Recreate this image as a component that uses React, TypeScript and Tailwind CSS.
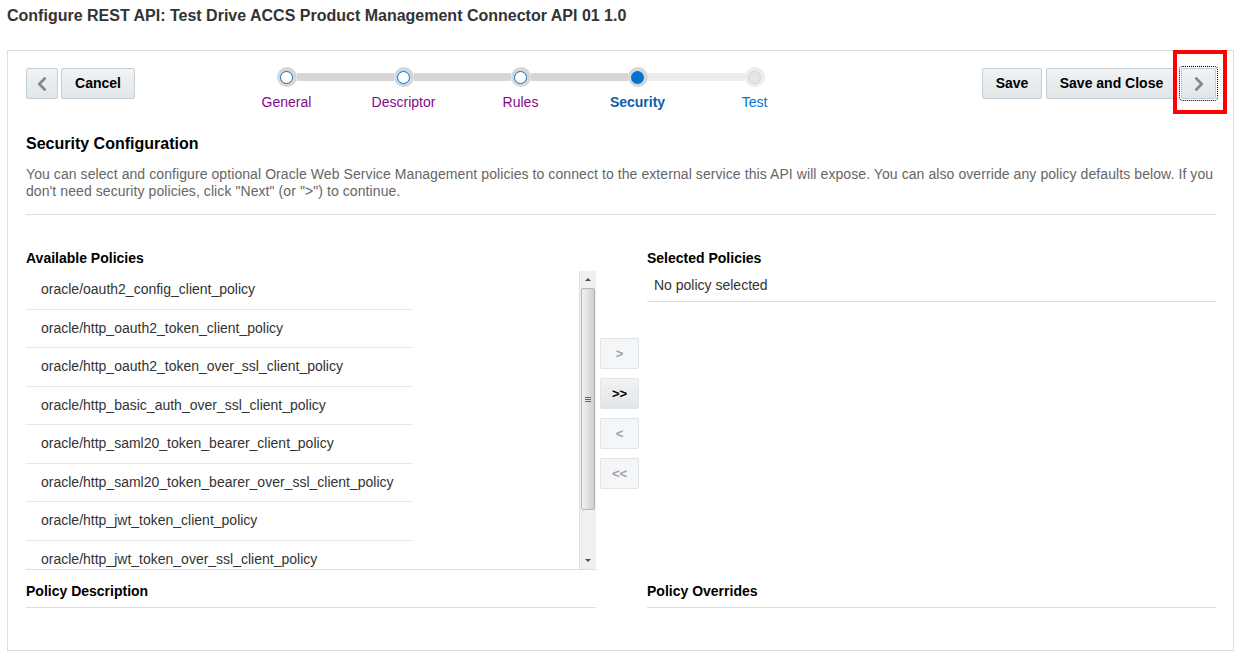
import { ChevronLeft, ChevronRight } from 'lucide-react';

const steps = [
  { label: 'General', state: 'done' },
  { label: 'Descriptor', state: 'done' },
  { label: 'Rules', state: 'done' },
  { label: 'Security', state: 'current' },
  { label: 'Test', state: 'todo' },
];

const policies = [
  'oracle/oauth2_config_client_policy',
  'oracle/http_oauth2_token_client_policy',
  'oracle/http_oauth2_token_over_ssl_client_policy',
  'oracle/http_basic_auth_over_ssl_client_policy',
  'oracle/http_saml20_token_bearer_client_policy',
  'oracle/http_saml20_token_bearer_over_ssl_client_policy',
  'oracle/http_jwt_token_client_policy',
  'oracle/http_jwt_token_over_ssl_client_policy',
];

const btn =
  'h-[31px] rounded-[2px] border border-[#c4ced7] bg-gradient-to-b from-[#f1f3f4] to-[#e1e6e9] text-[14px] font-bold text-[#000] flex items-center justify-center';

function Train() {
  return (
    <div className="flex ml-[93px] mt-[-1px]">
      {steps.map((s, i) => {
        const leftLight = s.state === 'todo';
        const rightLight = i === 3;
        return (
          <div key={s.label} className="w-[117px] flex flex-col items-center">
            <div className="flex items-center w-full h-[20px]">
              <div
                className={`flex-1 h-[8px] ${
                  i === 0 ? 'bg-transparent' : leftLight ? 'bg-[#ececec]' : 'bg-[#d6d6d6]'
                }`}
              />
              <div
                className={`w-[20px] h-[20px] rounded-full flex items-center justify-center ${
                  s.state === 'todo' ? 'bg-[#ececec]' : 'bg-[#d6d6d6]'
                }`}
              >
                {s.state === 'done' && (
                  <div className="w-[13px] h-[13px] rounded-full bg-white border-[1.5px] border-[#0572ce]" />
                )}
                {s.state === 'current' && (
                  <div className="w-[13px] h-[13px] rounded-full bg-[#0572ce]" />
                )}
                {s.state === 'todo' && (
                  <div className="w-[13px] h-[13px] rounded-full bg-[#e4e6e8] border border-[#d0d4d8]" />
                )}
              </div>
              <div
                className={`flex-1 h-[8px] ${
                  i === 4 ? 'bg-transparent' : rightLight ? 'bg-[#ececec]' : 'bg-[#d6d6d6]'
                }`}
              />
            </div>
            <div
              className={`mt-[7px] text-[14px] leading-[17px] ${
                s.state === 'done'
                  ? 'text-[#84088a]'
                  : s.state === 'current'
                  ? 'text-[#0a5fa8] font-bold'
                  : 'text-[#0572ce]'
              }`}
            >
              {s.label}
            </div>
          </div>
        );
      })}
    </div>
  );
}

function ScrollBar() {
  return (
    <div className="w-[17px] h-full flex flex-col bg-[#f0f0f0] border-l border-[#e0e0e0]">
      <div className="h-[17px] flex items-center justify-center">
        <div className="w-0 h-0 border-l-[3px] border-r-[3px] border-b-[3px] border-l-transparent border-r-transparent border-b-[#505050]" />
      </div>
      <div className="mx-[1px] h-[222px] rounded-[2px] border border-[#b4b4b4] bg-gradient-to-r from-[#f2f2f2] via-[#e0e0e0] to-[#cfcfcf] flex items-center justify-center">
        <div className="flex flex-col gap-[1px]">
          <div className="w-[6px] h-[1px] bg-[#666]" />
          <div className="w-[6px] h-[1px] bg-[#666]" />
          <div className="w-[6px] h-[1px] bg-[#666]" />
        </div>
      </div>
      <div className="flex-1" />
      <div className="h-[17px] flex items-center justify-center">
        <div className="w-0 h-0 border-l-[3px] border-r-[3px] border-t-[3px] border-l-transparent border-r-transparent border-t-[#505050]" />
      </div>
    </div>
  );
}

const shuttle =
  'w-[39px] h-[31px] rounded-[2px] border border-[#dfe4e8] bg-[#f5f6f7] flex items-center justify-center text-[13px] font-bold';

export default function App() {
  return (
    <div
      className="w-[1250px] h-[665px] bg-white text-[#333] overflow-hidden"
      style={{ fontFamily: '"Liberation Sans", Arial, sans-serif' }}
    >
      <h1 className="pl-[7px] pt-[7px] text-[16px] leading-[18px] font-bold text-[#333]">
        Configure REST API: Test Drive ACCS Product Management Connector API 01 1.0
      </h1>

      <div className="relative mt-[25px] ml-[7px] w-[1227px] h-[601px] border border-[#d6dfe6] pl-[18px] pr-[17px] pt-[17px]">
        {/* annotation */}
        <div className="absolute left-[1165px] top-[-1px] w-[54px] h-[64px] border-[4px] border-[#ff0000]" />

        <div className="flex items-start">
          <div className={`${btn} w-[32px]`}>
            <ChevronLeft size={22} strokeWidth={3} className="text-[#7d8a94]" />
          </div>
          <div className={`${btn} w-[74px] ml-[3px]`}>Cancel</div>
          <Train />
          <div className="ml-auto flex items-start">
            <div className={`${btn} w-[60px]`}>Save</div>
            <div className={`${btn} w-[131px] ml-[4px]`}>Save and Close</div>
            <div className={`${btn} w-[35px] ml-[4px] outline-1 outline-dotted outline-black outline-offset-[1px]`}>
              <ChevronRight size={22} strokeWidth={3} className="text-[#7d8a94]" />
            </div>
          </div>
        </div>

        <h2 className="mt-[23px] text-[16px] leading-[20px] font-bold text-[#000]">
          Security Configuration
        </h2>
        <p className="mt-[12px] text-[14px] leading-[17px] text-[#666] tracking-[0.08px]">
          You can select and configure optional Oracle Web Service Management policies to connect to the
          external service this API will expose. You can also override any policy defaults below. If you
          don't need security policies, click "Next" (or "&gt;") to continue.
        </p>
        <div className="mt-[14px] border-t border-[#d6dfe6]" />

        <div className="mt-[35px] flex">
          <div className="w-[570px]">
            <div className="text-[14px] leading-[17px] font-bold text-[#000]">Available Policies</div>
            <div className="mt-[4px] h-[299px] flex border-b border-[#d6dfe6]">
              <div className="flex-1 overflow-hidden">
                {policies.map((p, i) => (
                  <div
                    key={p}
                    className={`w-[387px] h-[38.5px] pl-[15px] flex items-center text-[14px] text-[#333] ${
                      i < policies.length - 1 ? 'border-b border-[#e4e9ed]' : ''
                    }`}
                  >
                    {p}
                  </div>
                ))}
              </div>
              <ScrollBar />
            </div>
            <div className="mt-[13px] text-[14px] leading-[17px] font-bold text-[#000]">Policy Description</div>
            <div className="mt-[7px] border-t border-[#d6dfe6]" />
          </div>

          <div className="ml-[4px] pt-[88px] flex flex-col gap-[9px]">
            <div className={`${shuttle} text-[#9aa3aa]`}>&gt;</div>
            <div className={`${shuttle} bg-gradient-to-b from-[#f1f3f4] to-[#e1e6e9] border-[#c4ced7] text-[#000]`}>
              &gt;&gt;
            </div>
            <div className={`${shuttle} text-[#9aa3aa]`}>&lt;</div>
            <div className={`${shuttle} text-[#9aa3aa]`}>&lt;&lt;</div>
          </div>

          <div className="ml-[8px] flex-1 flex flex-col">
            <div className="text-[14px] leading-[17px] font-bold text-[#000]">Selected Policies</div>
            <div className="pl-[7px] pt-[10px] pb-[7px] text-[14px] leading-[17px] text-[#333] border-b border-[#d6dfe6]">
              No policy selected
            </div>
            <div className="mt-[281px] text-[14px] leading-[17px] font-bold text-[#000]">Policy Overrides</div>
            <div className="mt-[7px] border-t border-[#d6dfe6]" />
          </div>
        </div>
      </div>
    </div>
  );
}
